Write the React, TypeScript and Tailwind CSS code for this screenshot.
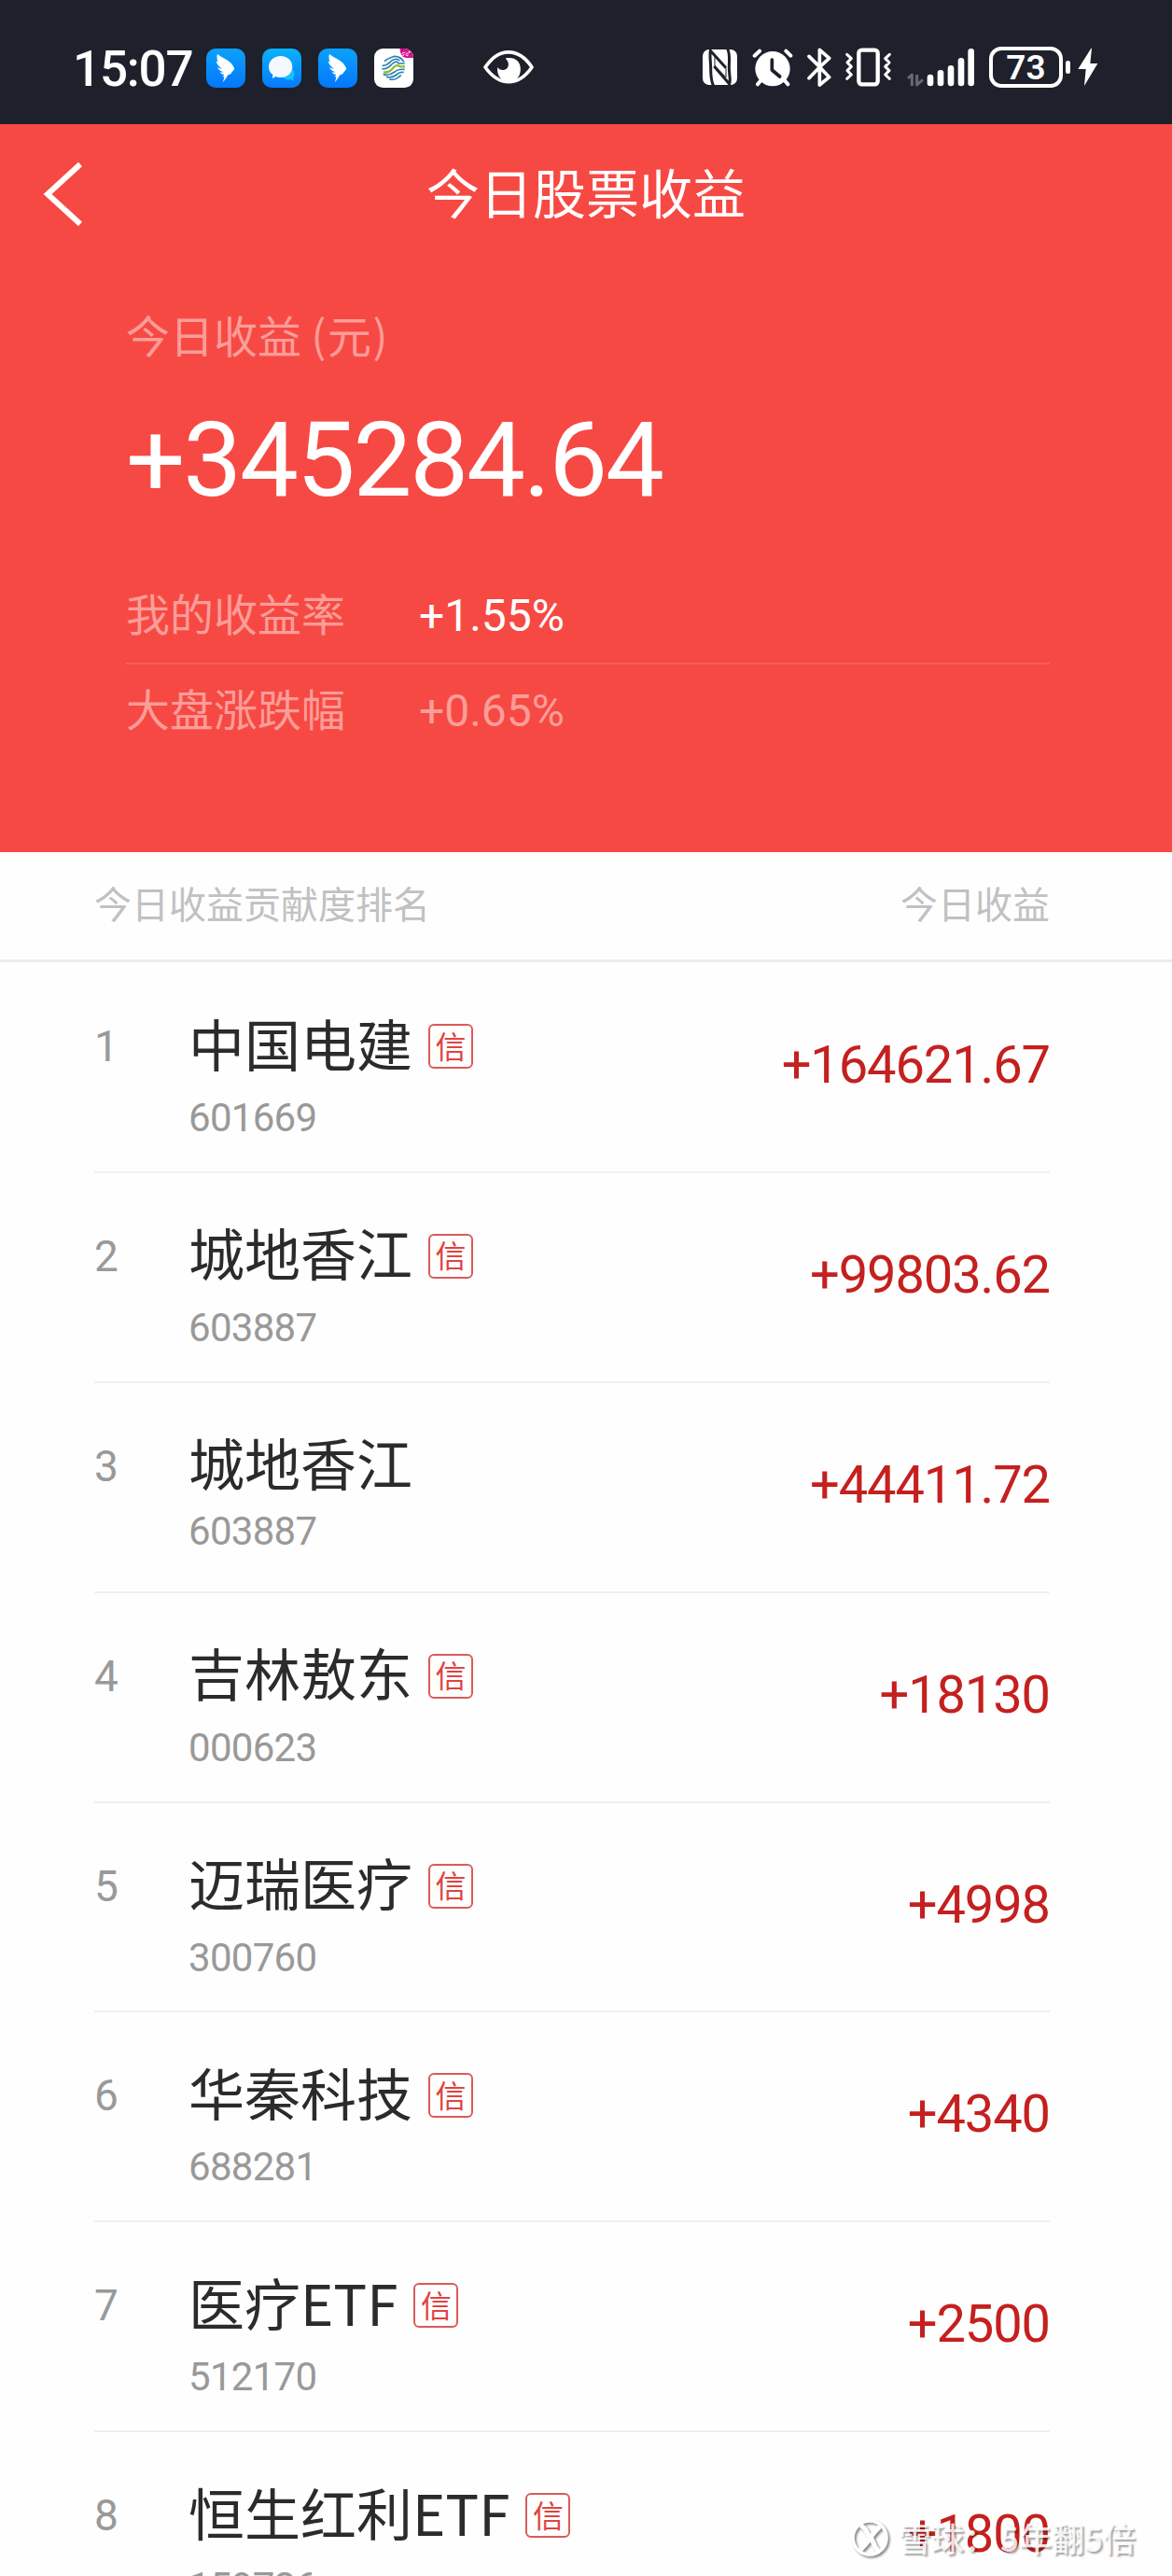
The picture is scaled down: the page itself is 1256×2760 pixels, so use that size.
import React from "react";

type Stock = { name: string; code: string; amount: string; credit: boolean };

const stocks: Stock[] = [
  { name: "中国电建", code: "601669", amount: "+164621.67", credit: true },
  { name: "城地香江", code: "603887", amount: "+99803.62", credit: true },
  { name: "城地香江", code: "603887", amount: "+44411.72", credit: false },
  { name: "吉林敖东", code: "000623", amount: "+18130", credit: true },
  { name: "迈瑞医疗", code: "300760", amount: "+4998", credit: true },
  { name: "华秦科技", code: "688281", amount: "+4340", credit: true },
  { name: "医疗ETF", code: "512170", amount: "+2500", credit: true },
  { name: "恒生红利ETF", code: "159726", amount: "+1800", credit: true },
];

const num = "font-['Roboto','Noto_Sans_CJK_SC',sans-serif]";

function WingIcon({ id }: { id: string }) {
  return (
    <svg className="size-[42px] shrink-0" viewBox="0 0 126 126">
      <defs>
        <linearGradient id={id} x1="0" y1="0" x2="0" y2="1">
          <stop offset="0" stopColor="#0aa2fb" />
          <stop offset="1" stopColor="#0577fb" />
        </linearGradient>
      </defs>
      <rect width="126" height="126" rx="30" fill={`url(#${id})`} />
      <path
        d="M36 17C42 24 60 31 74 42C83 49 88 57 91 65L77 83L71 84L54 109L58 91L50 90C54 89 57 87 58 84C51 84 46 80 44 75C48 77 51 77 55 76C46 72 38 68 36 60C41 64 46 65 51 65C40 58 33 49 32 40L38 44C35 36 33 26 36 17Z"
        fill="#fff"
      />
    </svg>
  );
}

function ChatIcon() {
  return (
    <svg className="size-[42px] shrink-0" viewBox="0 0 126 126">
      <defs>
        <linearGradient id="chat" x1="0" y1="0" x2="0" y2="1">
          <stop offset="0" stopColor="#0bb2fa" />
          <stop offset="1" stopColor="#067afc" />
        </linearGradient>
      </defs>
      <rect width="126" height="126" rx="30" fill="url(#chat)" />
      <path d="M97 67C105 76 105 87 99 93L102 104L91 99C80 102 70 99 64 91C80 91 91 82 97 67Z" fill="#13c5fa" />
      <path d="M59 24C81 24 97 39 97 59C97 79 80 93 59 93C53 93 48 92 43 90L33 96L34 84C26 78 21 69 21 59C21 39 38 24 59 24Z" fill="#f3f9ff" />
    </svg>
  );
}

function MobileIcon() {
  return (
    <svg className="size-[42px] shrink-0" viewBox="0 0 126 126">
      <defs>
        <clipPath id="tile"><rect width="126" height="126" rx="28" /></clipPath>
      </defs>
      <g clipPath="url(#tile)">
        <rect width="126" height="126" fill="#fff" />
        <path d="M83 0H126V30H104C91 30 83 18 83 0Z" fill="#d9118c" />
        <g fill="none" stroke="#fff" strokeWidth="2.6">
          <path d="M100 13H94C90 13 90 17 93 18C97 19 96 23 92 23H89" />
          <path d="M110 15H105C101 16 101 23 105 23H108V19" />
          <path d="M113 8V14M110 11H116" />
        </g>
      </g>
      <g fill="none" strokeWidth="5">
        <path d="M33 41C45 29 56 29 65 25C78 25 90 33 96 43" stroke="#2c7fb3" />
        <path d="M26 55C44 57 47 45 58 38C68 31 76 34 82 39" stroke="#2c7fb3" />
        <path d="M25 65C45 68 52 53 62 46C70 40 76 44 79 48L98 48" stroke="#2781b4" />
        <path d="M30 76C49 79 54 69 63 60C70 53 77 53 83 58H99" stroke="#8cba30" strokeWidth="7" />
        <path d="M29 83C45 88 57 82 66 75C74 67 84 66 98 67" stroke="#2781b4" />
        <path d="M39 91C56 95 68 88 76 81C82 75 87 76 95 76" stroke="#2c7fb3" />
        <path d="M49 98C64 104 79 93 86 85" stroke="#2c7fb3" />
      </g>
    </svg>
  );
}

function EyeIcon() {
  return (
    <svg className="h-[38px] w-[54px] shrink-0" viewBox="233 69 164 114">
      <path d="M239 126C261 96 282 77 315 77C348 77 371 96 391 126C371 155 348 174 315 174C282 174 260 155 239 126Z" fill="none" stroke="#fff" strokeWidth="11" strokeLinejoin="round" />
      <path d="M305 97C335 91 354 107 354 132C354 158 339 173 316 173C291 173 276 153 279 126C283 133 290 136 299 135C316 133 321 112 305 97Z" fill="#fff" />
    </svg>
  );
}

function NfcIcon() {
  return (
    <svg className="h-[38px] w-[37px] shrink-0" viewBox="69 69 111 114">
      <rect x="69" y="69" width="111" height="114" rx="21" fill="#fff" />
      <path d="M104 186C95 169 95 151 95 130C95 108 91 92 94 73L144 128M149 67C158 84 154 104 154 127C154 153 160 167 155 180L106 123" fill="none" stroke="#1e212b" strokeWidth="9" />
      <path d="M108 92V122L144 158V129L108 92" fill="none" stroke="#1e212b" strokeWidth="3" />
    </svg>
  );
}

function AlarmIcon() {
  return (
    <svg className="h-[41px] w-[44px] shrink-0" viewBox="227 65 132 123">
      <g stroke="#fff" strokeLinecap="round" strokeWidth="12">
        <path d="M235 88L251 73M336 73L351 88M255 168L245 180M332 168L342 180" />
      </g>
      <circle cx="293" cy="130" r="56" fill="#fff" />
      <path d="M291 101V134L316 155" fill="none" stroke="#1e212b" strokeWidth="11" strokeLinecap="round" strokeLinejoin="round" />
    </svg>
  );
}

function BluetoothIcon() {
  return (
    <svg className="h-[42px] w-[26px] shrink-0" viewBox="404 63 78 126">
      <path d="M410 91L444 125L475 158L444 183V126M410 161L444 126L475 97L444 70V126" fill="none" stroke="#fff" strokeWidth="11" strokeLinecap="round" strokeLinejoin="round" />
    </svg>
  );
}

function VibrateIcon() {
  return (
    <svg className="h-[42px] w-[51px] shrink-0" viewBox="525 64 153 126">
      <rect x="571" y="72" width="61" height="110" rx="10" fill="none" stroke="#fff" strokeWidth="13" />
      <path d="M533 86L547 99L534 112L547 125L534 138L547 151L533 164M670 86L656 99L669 112L656 125L669 138L656 151L670 164" fill="none" stroke="#fff" strokeWidth="9" strokeLinecap="round" strokeLinejoin="round" />
    </svg>
  );
}

function SignalIcon() {
  return (
    <svg className="h-[42px] w-[74px] shrink-0" viewBox="32 63 222 126">
      <path d="M51 186V150L38 162M67 150V183L86 166" fill="none" stroke="#666973" strokeWidth="9" strokeLinejoin="round" />
      <g stroke="#fff" strokeWidth="20" strokeLinecap="round">
        <path d="M110 159V177M143 145V177M176 130V177M209 106V177M241 76V177" />
      </g>
    </svg>
  );
}

function StatusBar() {
  return (
    <header className="flex h-[133px] w-full shrink-0 items-start bg-[#1e212b] pl-[78px] text-white">
      <div className={`mt-[44px] flex h-[60px] w-[143px] items-center text-[53px] font-medium leading-none tracking-[-1.2px] ${num}`}>15:07</div>
      <div className="mt-[52px] flex gap-[18px]">
        <WingIcon id="wing-a" />
        <ChatIcon />
        <WingIcon id="wing-b" />
        <MobileIcon />
      </div>
      <div className="ml-[75px] mt-[53px]"><EyeIcon /></div>
      <div className="ml-[181px] mt-[53px]"><NfcIcon /></div>
      <div className="ml-[16px] mt-[52px]"><AlarmIcon /></div>
      <div className="ml-[15px] mt-[51px]"><BluetoothIcon /></div>
      <div className="ml-[14px] mt-[51px]"><VibrateIcon /></div>
      <div className="ml-[15px] mt-[51px]"><SignalIcon /></div>
      <div className={`ml-[15px] mt-[50px] flex h-[44px] w-[79px] items-center justify-center rounded-[13px] border-4 border-white text-[37px] font-semibold leading-none ${num}`}>73</div>
      <div className="ml-[3px] mt-[65px] h-[14px] w-[5px] rounded-full bg-white" />
      <svg className="ml-[8px] mt-[51px] h-[42px] w-[22px] shrink-0" viewBox="584 64 66 126">
        <path d="M627 66L585 133H610L605 187L648 115H624L629 66Z" fill="#fff" />
      </svg>
    </header>
  );
}

function Rate({ label, value, strong }: { label: string; value: string; strong?: boolean }) {
  return (
    <div className="flex h-[100px] items-center">
      <span className="w-[314px] pb-[9px] text-[47px] leading-none text-[#fc9d98]">{label}</span>
      <span className={`text-[48px] leading-none ${num} ${strong ? "text-white" : "text-[#fc9d98]"}`}>{value}</span>
    </div>
  );
}

function Summary() {
  return (
    <section className="h-[780px] w-full shrink-0 bg-[#f74944]">
      <div className="grid h-[150px] grid-cols-[200px_1fr_200px] items-center">
        <svg className="ml-[46px] h-[70px] w-[44px]" viewBox="0 0 44 70" fill="none" stroke="#fff" strokeWidth="6">
          <path d="M40 3L5 35L40 67" />
        </svg>
        <h1 className="pb-[8px] text-center text-[57px] font-normal leading-none text-white">今日股票收益</h1>
      </div>
      <div className="pl-[135px] pr-[131px]">
        <div className="flex h-[156px] items-center pb-[7px] text-[47px] leading-none text-[#fc9d98]">
          <span>今日收益&nbsp;</span>
          <span className="tracking-[1.5px]">(元)</span>
        </div>
        <div className={`-mt-[11px] flex h-[130px] items-center text-[112px] leading-none tracking-[-2.2px] text-white ${num}`}>+345284.64</div>
        <div className="mt-[52px] border-b-2 border-[#f85f5a]"><Rate label="我的收益率" value="+1.55%" strong /></div>
        <Rate label="大盘涨跌幅" value="+0.65%" />
      </div>
    </section>
  );
}

function StockRow({ stock, rank }: { stock: Stock; rank: number }) {
  return (
    <li className="flex h-[224.9px] shrink-0 items-start border-b-2 border-[#efefef]">
      <span className={`mt-[59px] flex h-[60px] w-[101px] items-center text-[46px] leading-none text-[#999] ${num}`}>{rank}</span>
      <div>
        <div className="mt-[55px] flex h-[68px] items-center">
          <span className="pb-[9px] text-[60px] leading-none text-[#2b2b2b]">{stock.name}</span>
          {stock.credit && (
            <span className="ml-[17px] flex h-[48px] w-[48px] items-center justify-center rounded-[6px] border-2 border-[#dc5a5a] pb-[2px] text-[33px] leading-none text-[#e0433f]">信</span>
          )}
        </div>
        <div className={`${stock.credit ? "mt-[18px]" : "mt-[11px]"} flex h-[50px] items-center text-[42px] leading-none tracking-[-0.7px] text-[#999] ${num}`}>{stock.code}</div>
      </div>
      <span className={`ml-auto mt-[79px] flex h-[60px] items-center text-[56px] leading-none tracking-[-1.1px] text-[#c4201f] ${num}`}>{stock.amount}</span>
    </li>
  );
}

function Watermark() {
  return (
    <div className="absolute bottom-[18px] left-[911px] flex h-[44px] items-center whitespace-nowrap">
      <svg className="h-[44px] w-[44px] drop-shadow-[2px_2px_1px_rgba(0,0,0,0.45)]" viewBox="0 0 44 44" fill="none" stroke="#fff">
        <circle cx="21" cy="21" r="18" strokeWidth="3.5" />
        <path d="M11 8C18 10 18 18 22 21C26 25 25 33 32 36M32 9C27 14 24 17 22 21C19 26 15 30 11 34" strokeWidth="5" />
      </svg>
      <span className="ml-[8px] flex gap-[4px] pb-[4px] text-[35px] font-medium leading-none text-white/85 [text-shadow:2px_2px_2px_rgba(0,0,0,0.36)]">
        <span>雪球：</span>
        <span>5年翻5倍</span>
      </span>
    </div>
  );
}

export default function App() {
  return (
    <main className="relative flex h-[2760px] w-[1256px] flex-col overflow-hidden bg-[#fefefe] font-['Noto_Sans_CJK_SC',sans-serif]">
      <StatusBar />
      <Summary />
      <div className="flex h-[118px] w-full shrink-0 items-center justify-between border-b-3 border-[#ececec] pb-[7px] pl-[101px] pr-[131px] text-[40px] leading-none text-[#c1c1c1]">
        <span>今日收益贡献度排名</span>
        <span>今日收益</span>
      </div>
      <ul className="ml-[101px] mr-[131px] flex flex-col pt-px">
        {stocks.map((stock, i) => (
          <StockRow key={i} stock={stock} rank={i + 1} />
        ))}
      </ul>
      <Watermark />
    </main>
  );
}
